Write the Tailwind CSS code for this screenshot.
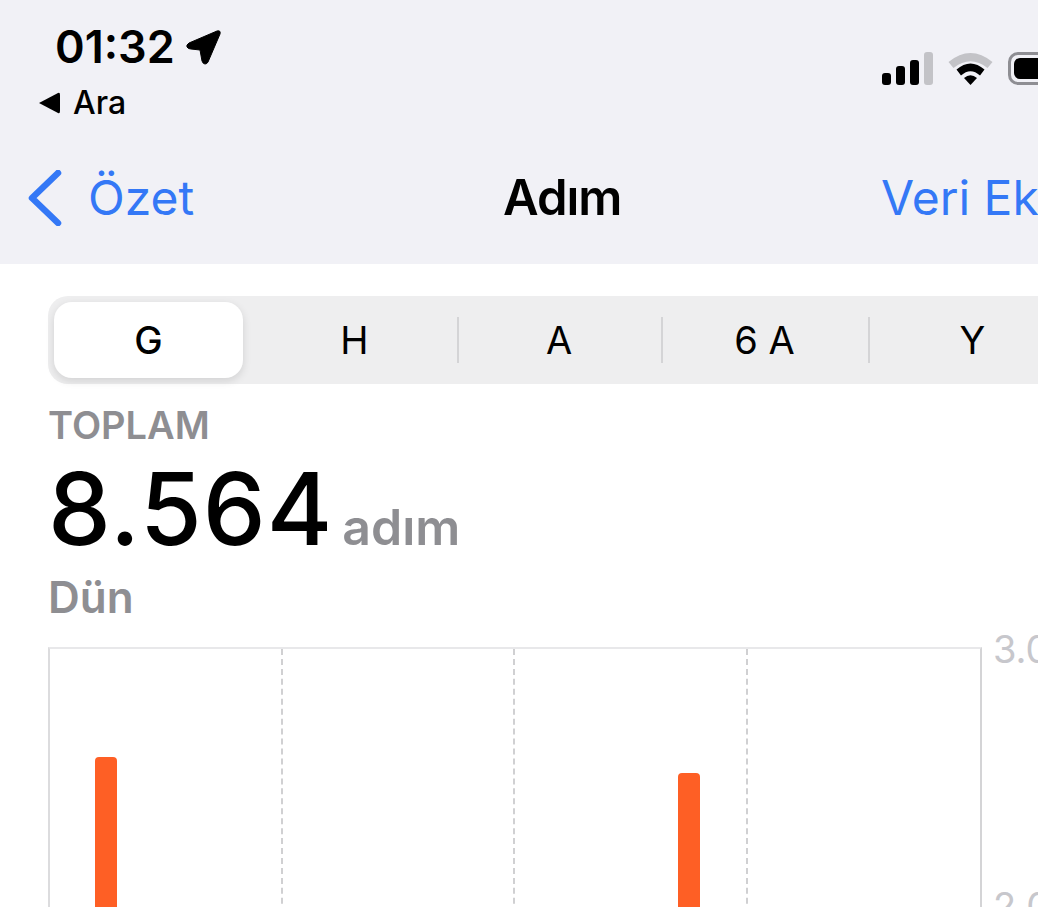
<!doctype html>
<html><head><meta charset="utf-8"><script src="https://cdn.jsdelivr.net/npm/@tailwindcss/browser@4"></script></head>
<body class="m-0 bg-white overflow-hidden">
<div class="w-[1038px] h-[907px] overflow-hidden font-['Inter',sans-serif] text-black">
<div class="w-[1125px]">
  <header class="h-[264px] bg-[#f1f1f6] flex flex-col">
    <div class="h-[142px] flex justify-between">
      <div class="pt-[23px]">
        <div class="flex items-center pl-[55px] h-[48px]">
          <span class="text-[45px] leading-[48px] font-semibold w-[131px]">01:32</span>
          <svg class="w-[36px] h-[36px]" viewBox="0 0 36 36"><path d="M31 2 L3 14 Q0 16 1 18 Q2 20 5 20 L14 21 L16 32 Q17 35 19 35 Q21 35 22 33 L34 5 Q35 1 31 2 Z" fill="#000" stroke="#000" stroke-width="1"/></svg>
        </div>
        <div class="flex items-center pl-[38px] h-[40px] mt-[12px]">
          <svg class="w-[22px] h-[22px]" viewBox="0 0 22 22"><path d="M1 11 L20 1 Q22 0 22 3 V19 Q22 22 20 21 Z" fill="#000"/></svg>
          <span class="ml-[13px] text-[32px] leading-[40px] font-medium">Ara</span>
        </div>
      </div>
      <div class="flex items-start gap-[15px] pt-[52px] pr-[27px]">
        <svg class="w-[51px] h-[33px]" viewBox="0 0 51 33"><rect x="0" y="21" width="9" height="12" rx="3" fill="#000"/><rect x="14" y="14" width="9" height="19" rx="3" fill="#000"/><rect x="28" y="8" width="9" height="25" rx="3" fill="#000"/><rect x="42" y="0" width="9" height="33" rx="3" fill="#c3c3c7"/></svg>
        <svg class="w-[45px] h-[33px]" viewBox="0 0 45 33"><path d="M0.5 10 Q22.5 -8 44.5 10 L39.5 16 Q22.5 2.5 5.5 16 Z" fill="#c3c3c7"/><path d="M8.5 17.5 Q22.5 5.5 36.5 17.5 L32 23.5 Q22.5 15 13 23.5 Z" fill="#000"/><path d="M16 26 Q22.5 20.5 29 26 L22.5 33 Z" fill="#000"/></svg>
        <div class="w-[90px] h-[33px] border-[3px] border-[#8e8e93] rounded-[10px] p-[3px]"><div class="h-full w-[60px] bg-black rounded-[6px]"></div></div>
      </div>
    </div>
    <nav class="h-[122px] flex items-start pt-[28px] pl-[28px] text-[#3478f6]">
      <div class="flex items-center w-[475px] h-[56px]">
        <svg class="w-[34px] h-[56px]" viewBox="0 0 34 56"><path d="M30 3 L4 28 L30 53" fill="none" stroke="#3478f6" stroke-width="6.5" stroke-linecap="round" stroke-linejoin="round"/></svg>
        <span class="ml-[26px] text-[48px] leading-[56px]">Özet</span>
      </div>
      <span class="w-[378px] text-[49px] leading-[56px] font-semibold text-black tracking-[-1px]">Adım</span>
      <span class="text-[48px] leading-[56px] whitespace-nowrap">Veri Ekle</span>
    </nav>
  </header>
  <main class="pl-[48px] pt-[32px]">
    <div class="w-[1029px] h-[88px] bg-[#eeeeef] rounded-[20px] flex items-center">
      <div class="-ml-[2px] w-[205.5px] h-full flex items-center">
        <div class="ml-[8px] w-[189px] h-[76px] bg-white rounded-[18px] shadow-[0_3px_8px_rgba(0,0,0,0.12)] flex items-center justify-center text-[38px] font-medium">G</div>
      </div>
      <div class="w-[207.5px] h-[46px] flex items-center justify-center text-[38px] border-r-2 border-[#d4d4d6]">H</div>
      <div class="w-[204px] h-[46px] pr-[2px] flex items-center justify-center text-[38px] border-r-2 border-[#d4d4d6]">A</div>
      <div class="w-[207px] h-[46px] pr-[2px] flex items-center justify-center text-[38px] border-r-2 border-[#d4d4d6]">6 A</div>
      <div class="w-[205px] h-[46px] flex items-center justify-center text-[38px]">Y</div>
    </div>
    <div class="mt-[21px] text-[38px] leading-[40px] font-semibold text-[#8e8e92]">TOPLAM</div>
    <div class="flex items-baseline h-[104px] mt-[12px]">
      <span class="text-[100px] leading-[104px] font-[450] tracking-[1px]">8.564</span>
      <span class="ml-[9px] text-[50px] font-semibold text-[#8e8e92]">adım</span>
    </div>
    <div class="mt-[9px] text-[44px] leading-[54px] font-semibold text-[#8e8e92]">Dün</div>
    <div class="mt-[23px] flex">
      <div class="w-[934px] h-[400px] border-t-2 border-l-2 border-r-2 border-t-[#e8e8ea] border-l-[#dcdcde] border-r-[#d4d4d6] grid grid-cols-4">
        <div class="border-r-2 border-dashed border-[#d0d0d2] pl-[45px] pt-[108px]"><div class="w-[22px] h-[300px] bg-[#fe5f25] rounded-t-[4px]"></div></div>
        <div class="border-r-2 border-dashed border-[#d0d0d2]"></div>
        <div class="border-r-2 border-dashed border-[#d0d0d2] pl-[163px] pt-[124px]"><div class="w-[22px] h-[300px] bg-[#fe5f25] rounded-t-[4px]"></div></div>
        <div></div>
      </div>
      <div class="pl-[11px] text-[38px] leading-[44px] text-[#c7c7cc]">
        <div class="-mt-[20px]">3.000</div>
        <div class="mt-[213px]">2.000</div>
      </div>
    </div>
  </main>
</div>
</div>
</body></html>
